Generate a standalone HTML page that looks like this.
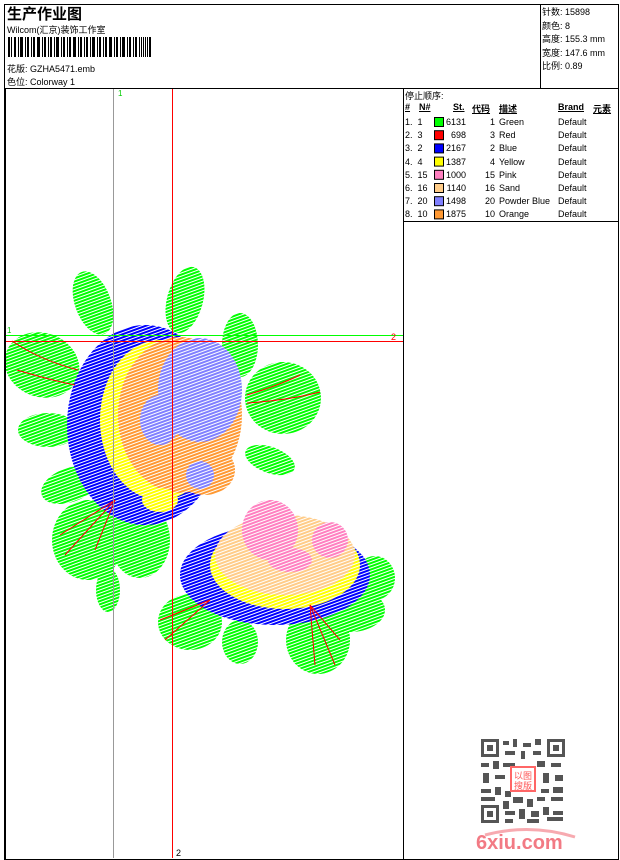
<!DOCTYPE html>
<html><head><meta charset="utf-8"><style>
body{margin:0;background:#fff;width:620px;height:860px;position:relative;overflow:hidden;font-family:"Liberation Sans","Noto Sans CJK SC",sans-serif;color:#000}
.a{position:absolute;white-space:nowrap}
.s{font-size:9px}
</style></head><body>
<div class="a" style="left:4px;top:4px;width:613px;height:854px;border:1px solid #000"></div>
<div class="a" style="left:4px;top:88px;width:614px;height:1px;background:#000"></div>
<div class="a" style="left:540px;top:4px;width:1px;height:84px;background:#000"></div>
<div class="a" style="left:403px;top:88px;width:1px;height:771px;background:#000"></div>
<div class="a" style="left:403px;top:221px;width:215px;height:1px;background:#000"></div>
<div class="a" style="left:7px;top:3px;font-size:15px;font-weight:bold">生产作业图</div>
<div class="a s" style="left:7px;top:23px">Wilcom(汇京)装饰工作室</div>
<svg class="a" style="left:8px;top:37px" width="145" height="20"><g fill="#000">
<rect x="0" y="0" width="2" height="20"/><rect x="3" y="0" width="1" height="20"/><rect x="6" y="0" width="2" height="20"/><rect x="10" y="0" width="1" height="20"/><rect x="12" y="0" width="3" height="20"/><rect x="17" y="0" width="1" height="20"/><rect x="19" y="0" width="2" height="20"/><rect x="23" y="0" width="1" height="20"/><rect x="25" y="0" width="2" height="20"/><rect x="29" y="0" width="3" height="20"/><rect x="34" y="0" width="1" height="20"/><rect x="36" y="0" width="2" height="20"/><rect x="40" y="0" width="1" height="20"/><rect x="42" y="0" width="2" height="20"/><rect x="46" y="0" width="1" height="20"/><rect x="48" y="0" width="3" height="20"/><rect x="53" y="0" width="1" height="20"/><rect x="55" y="0" width="2" height="20"/><rect x="59" y="0" width="1" height="20"/><rect x="61" y="0" width="2" height="20"/><rect x="65" y="0" width="3" height="20"/><rect x="70" y="0" width="1" height="20"/><rect x="72" y="0" width="2" height="20"/><rect x="76" y="0" width="1" height="20"/><rect x="78" y="0" width="2" height="20"/><rect x="82" y="0" width="1" height="20"/><rect x="84" y="0" width="3" height="20"/><rect x="89" y="0" width="1" height="20"/><rect x="91" y="0" width="2" height="20"/><rect x="95" y="0" width="1" height="20"/><rect x="97" y="0" width="2" height="20"/><rect x="101" y="0" width="3" height="20"/><rect x="106" y="0" width="1" height="20"/><rect x="108" y="0" width="2" height="20"/><rect x="112" y="0" width="1" height="20"/><rect x="114" y="0" width="3" height="20"/><rect x="119" y="0" width="1" height="20"/><rect x="121" y="0" width="2" height="20"/><rect x="125" y="0" width="1" height="20"/><rect x="127" y="0" width="2" height="20"/><rect x="131" y="0" width="1" height="20"/><rect x="133" y="0" width="1" height="20"/><rect x="135" y="0" width="1" height="20"/><rect x="137" y="0" width="1" height="20"/><rect x="139" y="0" width="1" height="20"/><rect x="141" y="0" width="2" height="20"/>
</g></svg>
<div class="a s" style="left:7px;top:62px">花版:  GZHA5471.emb</div>
<div class="a s" style="left:7px;top:75px">色位:  Colorway 1</div>
<div class="a s" style="left:542px;top:6px;line-height:13.5px">针数:  15898<br>颜色:  8<br>高度:  155.3 mm<br>宽度:  147.6 mm<br>比例:  0.89</div>

<div class="a s" style="left:405px;top:89px">停止顺序:</div>
<div class="a s" style="left:405px;top:102px;font-weight:bold;text-decoration:underline">#</div>
<div class="a s" style="left:419px;top:102px;font-weight:bold;text-decoration:underline">N#</div>
<div class="a s" style="left:453px;top:102px;font-weight:bold;text-decoration:underline">St.</div>
<div class="a s" style="left:472px;top:102px;font-weight:bold;text-decoration:underline">代码</div>
<div class="a s" style="left:499px;top:102px;font-weight:bold;text-decoration:underline">描述</div>
<div class="a s" style="left:558px;top:102px;font-weight:bold;text-decoration:underline">Brand</div>
<div class="a s" style="left:593px;top:102px;font-weight:bold;text-decoration:underline">元素</div>
<div class="a s" style="left:405px;top:116px;line-height:13.2px">1.&nbsp; 1<br>2.&nbsp; 3<br>3.&nbsp; 2<br>4.&nbsp; 4<br>5.&nbsp; 15<br>6.&nbsp; 16<br>7.&nbsp; 20<br>8.&nbsp; 10</div>
<div class="a s" style="left:434px;top:116px;line-height:13.2px;width:32px;text-align:right">6131<br>698<br>2167<br>1387<br>1000<br>1140<br>1498<br>1875</div>
<div class="a s" style="left:470px;top:116px;line-height:13.2px;width:25px;text-align:right">1<br>3<br>2<br>4<br>15<br>16<br>20<br>10</div>
<div class="a s" style="left:499px;top:116px;line-height:13.2px">Green<br>Red<br>Blue<br>Yellow<br>Pink<br>Sand<br>Powder Blue<br>Orange</div>
<div class="a s" style="left:558px;top:116px;line-height:13.2px">Default<br>Default<br>Default<br>Default<br>Default<br>Default<br>Default<br>Default</div>
<svg class="a" style="left:434px;top:117px" width="10" height="106"><g stroke="#000" stroke-width="1">
<rect x=".5" y=".5" width="9" height="9" fill="#00ff00"/><rect x=".5" y="13.7" width="9" height="9" fill="#ff0000"/><rect x=".5" y="26.9" width="9" height="9" fill="#0000ff"/><rect x=".5" y="40.1" width="9" height="9" fill="#ffff00"/><rect x=".5" y="53.3" width="9" height="9" fill="#ff80c0"/><rect x=".5" y="66.5" width="9" height="9" fill="#ffcc88"/><rect x=".5" y="79.7" width="9" height="9" fill="#8080ff"/><rect x=".5" y="92.9" width="9" height="9" fill="#ff9933"/></g></svg>

<svg class="a" style="left:5px;top:89px" width="398" height="769">
<defs>
<pattern id="h" width="3" height="3" patternUnits="userSpaceOnUse" patternTransform="rotate(70)"><rect width="1" height="3" fill="#fff"/></pattern>
</defs>
<g transform="translate(-5,-89)">
<g fill="#00ff00">
<ellipse cx="93" cy="303" rx="18" ry="33" transform="rotate(-20 93 303)"/>
<ellipse cx="185" cy="300" rx="18" ry="34" transform="rotate(15 185 300)"/>
<ellipse cx="240" cy="345" rx="18" ry="32"/>
<ellipse cx="42" cy="365" rx="38" ry="32" transform="rotate(20 42 365)"/>
<ellipse cx="283" cy="398" rx="38" ry="36"/>
<ellipse cx="48" cy="430" rx="30" ry="17"/>
<ellipse cx="270" cy="460" rx="26" ry="13" transform="rotate(20 270 460)"/>
<ellipse cx="70" cy="485" rx="30" ry="17" transform="rotate(-20 70 485)"/>
<ellipse cx="88" cy="540" rx="36" ry="40"/>
<ellipse cx="140" cy="540" rx="30" ry="38"/>
<ellipse cx="108" cy="590" rx="12" ry="22"/>
<ellipse cx="190" cy="622" rx="32" ry="28"/>
<ellipse cx="240" cy="642" rx="18" ry="22"/>
<ellipse cx="318" cy="640" rx="32" ry="34"/>
<ellipse cx="350" cy="610" rx="35" ry="22"/>
<ellipse cx="375" cy="578" rx="20" ry="22"/>
</g>
<ellipse cx="145" cy="425" rx="78" ry="100" fill="#0000ff"/>
<ellipse cx="160" cy="420" rx="60" ry="80" fill="#ffff00"/>
<ellipse cx="180" cy="415" rx="62" ry="78" fill="#ff9933"/>
<ellipse cx="200" cy="390" rx="42" ry="52" fill="#8080ff"/>
<ellipse cx="160" cy="420" rx="20" ry="25" fill="#8080ff"/>
<ellipse cx="205" cy="470" rx="30" ry="25" fill="#ff9933"/>
<ellipse cx="200" cy="475" rx="14" ry="14" fill="#8080ff"/>
<ellipse cx="160" cy="500" rx="18" ry="12" fill="#ffff00"/>
<ellipse cx="275" cy="575" rx="95" ry="50" fill="#0000ff"/>
<ellipse cx="285" cy="565" rx="75" ry="44" fill="#ffff00"/>
<ellipse cx="285" cy="555" rx="70" ry="40" fill="#ffcc88"/>
<ellipse cx="270" cy="530" rx="28" ry="30" fill="#ff80c0"/>
<ellipse cx="330" cy="540" rx="18" ry="18" fill="#ff80c0"/>
<ellipse cx="290" cy="560" rx="22" ry="12" fill="#ff80c0"/>
<rect x="0" y="250" width="403" height="450" fill="url(#h)"/>
<g stroke="#ff0000" fill="none" stroke-width="1">
<path d="M12 341 Q40 360 78 370"/><path d="M17 370 Q50 380 75 385"/>
<path d="M247 395 Q280 385 300 375"/><path d="M247 403 Q290 400 320 392"/>
<path d="M115 500 L60 535 M115 500 L65 555 M115 500 L95 550"/>
<path d="M210 600 L160 620 M210 600 L165 640"/>
<path d="M310 605 L315 665 M310 605 L335 665 M310 605 L340 640"/>
</g>
</g>
<rect x="108" y="0" width="1" height="769" fill="#999"/>
<rect x="167" y="0" width="1" height="769" fill="#ff0000"/>
<rect x="0" y="246" width="398" height="1" fill="#00ff00"/>
<rect x="0" y="252" width="398" height="1" fill="#ff0000"/>
<text x="113" y="7" font-size="8" fill="#00cc00" font-family="Liberation Sans">1</text>
<text x="2" y="244" font-size="8" fill="#00cc00" font-family="Liberation Sans">1</text>
<text x="386" y="251" font-size="9" fill="#ff0000" font-family="Liberation Sans">2</text>
<text x="171" y="767" font-size="9" fill="#000" font-family="Liberation Sans">2</text>
</svg>
<div class="a" style="left:5px;top:89px;width:1px;height:770px;background:#000"></div>

<svg class="a" style="left:481px;top:739px" width="84" height="84">
<rect width="84" height="84" fill="#fff"/>
<g fill="#555">
<rect x="0" y="0" width="18" height="18"/><rect x="66" y="0" width="18" height="18"/><rect x="0" y="66" width="18" height="18"/>
</g>
<g fill="#fff"><rect x="3" y="3" width="12" height="12"/><rect x="69" y="3" width="12" height="12"/><rect x="3" y="69" width="12" height="12"/></g>
<g fill="#555"><rect x="6" y="6" width="6" height="6"/><rect x="72" y="6" width="6" height="6"/><rect x="6" y="72" width="6" height="6"/>
<rect x="22" y="2" width="6" height="4"/><rect x="32" y="0" width="4" height="8"/><rect x="42" y="4" width="8" height="4"/><rect x="54" y="0" width="6" height="6"/><rect x="24" y="12" width="10" height="4"/><rect x="40" y="12" width="4" height="8"/><rect x="52" y="12" width="8" height="4"/>
<rect x="0" y="24" width="8" height="4"/><rect x="12" y="22" width="6" height="8"/><rect x="22" y="24" width="12" height="4"/><rect x="56" y="22" width="8" height="6"/><rect x="70" y="24" width="10" height="4"/>
<rect x="2" y="34" width="6" height="10"/><rect x="14" y="36" width="10" height="4"/><rect x="62" y="34" width="6" height="10"/><rect x="74" y="36" width="8" height="6"/>
<rect x="0" y="50" width="10" height="4"/><rect x="14" y="48" width="6" height="8"/><rect x="24" y="52" width="6" height="6"/><rect x="60" y="50" width="8" height="4"/><rect x="72" y="48" width="10" height="6"/>
<rect x="0" y="58" width="14" height="4"/><rect x="22" y="62" width="6" height="8"/><rect x="32" y="58" width="10" height="6"/><rect x="46" y="60" width="6" height="8"/><rect x="56" y="58" width="8" height="4"/><rect x="70" y="58" width="12" height="4"/>
<rect x="24" y="72" width="10" height="4"/><rect x="38" y="70" width="6" height="10"/><rect x="50" y="72" width="8" height="6"/><rect x="62" y="68" width="6" height="8"/><rect x="72" y="72" width="10" height="4"/><rect x="24" y="80" width="8" height="4"/><rect x="46" y="80" width="12" height="4"/><rect x="66" y="78" width="16" height="4"/>
</g>
<rect x="30" y="28" width="24" height="24" fill="#fff" stroke="#f66" stroke-width="2"/>
<text x="33" y="40" font-size="9" fill="#f55" font-family="Noto Sans CJK SC">以图</text>
<text x="33" y="50" font-size="9" fill="#f55" font-family="Noto Sans CJK SC">搜版</text>
</svg>
<svg class="a" style="left:470px;top:825px" width="110" height="30">
<path d="M15 10 Q60 -2 105 12" stroke="#f7aab0" stroke-width="3" fill="none"/>
<text x="6" y="24" font-size="20" font-weight="bold" fill="#f27a84" font-family="Liberation Sans">6xiu.com</text>
</svg>
</body></html>
